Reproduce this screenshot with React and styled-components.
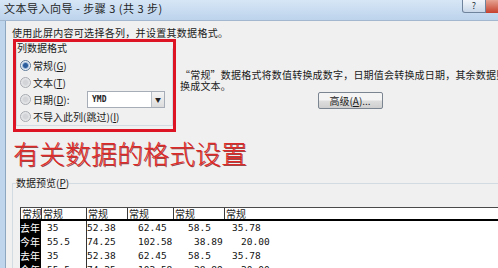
import React from 'react';
import styled, { createGlobalStyle } from 'styled-components';

// styles

const GlobalStyle = createGlobalStyle`
  html, body {
    margin: 0;
    padding: 0;
    background: #f0f0f0;
  }
  body {
    font-family: "Noto Sans CJK SC", "Liberation Sans", sans-serif;
  }
`;

const Window = styled.div`
  width: 498px;
  height: 268px;
  overflow: hidden;
  display: flex;
  flex-direction: column;
  background: #f0f0f0;
  color: #1a1a1a;
  font-size: 10px;
`;

const TitleBar = styled.div`
  height: 20px;
  flex: none;
  display: flex;
  justify-content: space-between;
  align-items: flex-start;
  background: linear-gradient(#d7e6f6, #bcd3ec);
  border-bottom: 1px solid #a3b8ce;
`;

const Title = styled.div`
  padding-left: 4px;
  font-size: 11px;
  line-height: 16px;
  letter-spacing: 0.5px;
  color: #1e1e1e;
  white-space: nowrap;
`;

const Controls = styled.div`
  display: flex;
`;

const HelpButton = styled.div`
  width: 22px;
  height: 12px;
  border: 1px solid #6f849c;
  border-top: none;
  border-radius: 0 0 0 3px;
  background: linear-gradient(#f2f6fb, #c8d7e8);
  font-size: 9px;
  line-height: 11px;
  text-align: center;
  color: #2a3440;
`;

const CloseButton = styled.div`
  width: 12px;
  height: 13px;
  background: linear-gradient(#e6a392, #c63f2d);
`;

const Body = styled.div`
  flex: 1;
  display: flex;
  min-height: 0;
`;

const Frame = styled.div`
  width: 5px;
  flex: none;
  background: #bfd5ec;
  border-right: 1px solid #8ea7c1;
`;

const Content = styled.div`
  flex: 1;
  min-width: 0;
  padding: 6px 0 0 6px;
  overflow: hidden;
`;

const Intro = styled.div`
  line-height: 12px;
  letter-spacing: 0.3px;
  white-space: nowrap;
`;

const TopRow = styled.div`
  display: flex;
  align-items: flex-start;
`;

const RedBox = styled.div`
  box-sizing: border-box;
  width: 163px;
  height: 93px;
  margin-left: 1px;
  flex: none;
  border: 3px solid #dc1424;
  padding: 0 0 3px 0;
  display: flex;
`;

const Group = styled.fieldset`
  flex: 1;
  margin: 0;
  padding: 0 0 0 3px;
  border: 1px solid #d3dbe2;
  border-top-color: transparent;
  min-width: 0;
`;

const GroupLabel = styled.legend`
  padding: 0;
  margin-left: -3px;
  line-height: 12px;
  white-space: nowrap;
`;

const RadioRow = styled.div`
  height: 17px;
  display: flex;
  align-items: center;
  gap: 2px;
  white-space: nowrap;
  &:first-of-type {
    margin-top: 3px;
  }
`;

const Radio = styled.span`
  box-sizing: border-box;
  width: 11px;
  height: 11px;
  border-radius: 50%;
  flex: none;
  border: 1px solid ${(p) => (p.$on ? '#5b7898' : '#a7abb0')};
  background: ${(p) =>
    p.$on
      ? 'radial-gradient(circle, #2b5d9c 0 2px, #9ab7d8 3px, #eef2f7 4px)'
      : 'radial-gradient(circle, #d2d4d7 0 2px, #e6e7e9 4px)'};
`;

const RadioText = styled.span`
  width: ${(p) => p.$w || 'auto'};
  line-height: 12px;
`;

const Select = styled.div`
  box-sizing: border-box;
  width: 78px;
  height: 17px;
  display: flex;
  align-items: center;
  border: 1px solid #a6adb6;
  background: #fff;
`;

const SelectValue = styled.span`
  flex: 1;
  padding-left: 4px;
  font-family: "DejaVu Sans Mono", monospace;
  font-size: 8px;
  font-weight: bold;
  color: #222;
`;

const SelectArrow = styled.span`
  box-sizing: border-box;
  width: 13px;
  height: 15px;
  border-left: 1px solid #b8bec6;
  background: linear-gradient(#f4f4f4, #dcdcdc);
  font-size: 6px;
  line-height: 15px;
  text-align: center;
  color: #222;
`;

const RightPane = styled.div`
  flex: none;
  width: 340px;
  margin-left: 4px;
  padding-top: 30px;
  text-align: center;
`;

const Description = styled.div`
  text-align: left;
  line-height: 11px;
  letter-spacing: 0.2px;
  white-space: nowrap;
`;

const Button = styled.div`
  box-sizing: border-box;
  display: inline-block;
  width: 65px;
  height: 17px;
  margin-top: 1px;
  border: 1px solid #7b8591;
  border-radius: 2px;
  background: linear-gradient(#f4f4f4 0 45%, #dddddd 55%, #cfcfcf);
  line-height: 15px;
  text-align: center;
  white-space: nowrap;
`;

const BigNote = styled.div`
  margin: 6px 0 0 1px;
  font-size: 26px;
  font-weight: 300;
  line-height: 30px;
  color: #e02a2a;
  text-shadow: 1px 1px 0 rgba(130, 15, 15, 0.75);
  white-space: nowrap;
`;

const Preview = styled.fieldset`
  margin: 9px 0 0 0;
  padding: 0 0 0 3px;
  border: 1px solid #d3dbe2;
  border-right: none;
  border-bottom: none;
  min-width: 0;
`;

const PreviewLabel = styled.legend`
  padding: 0;
  line-height: 12px;
`;

const Table = styled.div`
  margin: 18px 0 0 4px;
  font-size: 10px;
`;

const HeaderRow = styled.div`
  display: flex;
  height: 11px;
  background: #fff;
  border-top: 1px solid #4a4a4a;
  border-bottom: 2px solid #000;
`;

const HeaderCell = styled.div`
  box-sizing: border-box;
  width: ${(p) => p.$w}px;
  flex: ${(p) => (p.$w ? 'none' : 1)};
  border-left: 1px solid #3a3a3a;
  padding-left: 1px;
  line-height: 11px;
  white-space: nowrap;
`;

const DataRow = styled.div`
  display: flex;
  height: 14px;
  background: #fff;
`;

const LabelCell = styled.div`
  box-sizing: border-box;
  width: 21px;
  flex: none;
  background: #000;
  color: #fff;
  line-height: 14px;
  white-space: nowrap;
`;

const DataCell = styled.div`
  box-sizing: border-box;
  width: ${(p) => p.$w}px;
  flex: ${(p) => (p.$w ? 'none' : 1)};
  padding-left: ${(p) => p.$indent}px;
  border-left: 1px solid ${(p) => (p.$sep ? '#333' : 'transparent')};
  font-family: "DejaVu Sans Mono", monospace;
  font-size: 9.5px;
  line-height: 14px;
  white-space: nowrap;
  color: #111;
`;

// data

const widths = [21, 45, 41, 46, 51, 0];

const rows = [
  { label: '去年', cells: [['35', 5], ['52.38', 0], ['62.45', 10], ['58.5', 14], ['35.78', 7]] },
  { label: '今年', cells: [['55.5', 5], ['74.25', 0], ['102.58', 10], ['38.89', 20], ['20.00', 16]] },
  { label: '去年', cells: [['35', 5], ['52.38', 0], ['62.45', 10], ['58.5', 14], ['35.78', 7]] },
  { label: '今年', cells: [['55.5', 5], ['74.25', 0], ['102.58', 10], ['38.89', 20], ['20.00', 16]] },
];

const App = () => {
  return (
    <>
      <GlobalStyle />
      <Window>
        <TitleBar>
          <Title>文本导入向导 - 步骤 3 (共 3 步)</Title>
          <Controls>
            <HelpButton>?</HelpButton>
            <CloseButton />
          </Controls>
        </TitleBar>
        <Body>
          <Frame />
          <Content>
            <Intro>使用此屏内容可选择各列，并设置其数据格式。</Intro>
            <TopRow>
              <RedBox>
                <Group>
                  <GroupLabel>列数据格式</GroupLabel>
                  <RadioRow>
                    <Radio $on />
                    <RadioText>
                      常规(<u>G</u>)
                    </RadioText>
                  </RadioRow>
                  <RadioRow>
                    <Radio />
                    <RadioText>
                      文本(<u>T</u>)
                    </RadioText>
                  </RadioRow>
                  <RadioRow>
                    <Radio />
                    <RadioText $w='52px'>
                      日期(<u>D</u>):
                    </RadioText>
                    <Select>
                      <SelectValue>YMD</SelectValue>
                      <SelectArrow>▼</SelectArrow>
                    </Select>
                  </RadioRow>
                  <RadioRow>
                    <Radio />
                    <RadioText>
                      不导入此列(跳过)(<u>I</u>)
                    </RadioText>
                  </RadioRow>
                </Group>
              </RedBox>
              <RightPane>
                <Description>
                  “常规”数据格式将数值转换成数字，日期值会转换成日期，其余数据则转
                  <br />
                  换成文本。
                </Description>
                <Button>
                  高级(<u>A</u>)...
                </Button>
              </RightPane>
            </TopRow>
            <BigNote>有关数据的格式设置</BigNote>
            <Preview>
              <PreviewLabel>
                数据预览(<u>P</u>)
              </PreviewLabel>
              <Table>
                <HeaderRow>
                  {widths.map((w, i) => (
                    <HeaderCell key={i} $w={w}>
                      常规
                    </HeaderCell>
                  ))}
                </HeaderRow>
                {rows.map((row, r) => (
                  <DataRow key={r}>
                    <LabelCell>{row.label}</LabelCell>
                    {row.cells.map(([text, indent], c) => (
                      <DataCell
                        key={c}
                        $w={widths[c + 1]}
                        $indent={indent}
                        $sep={c === 1}
                      >
                        {text}
                      </DataCell>
                    ))}
                  </DataRow>
                ))}
              </Table>
            </Preview>
          </Content>
        </Body>
      </Window>
    </>
  );
};

export default App;
